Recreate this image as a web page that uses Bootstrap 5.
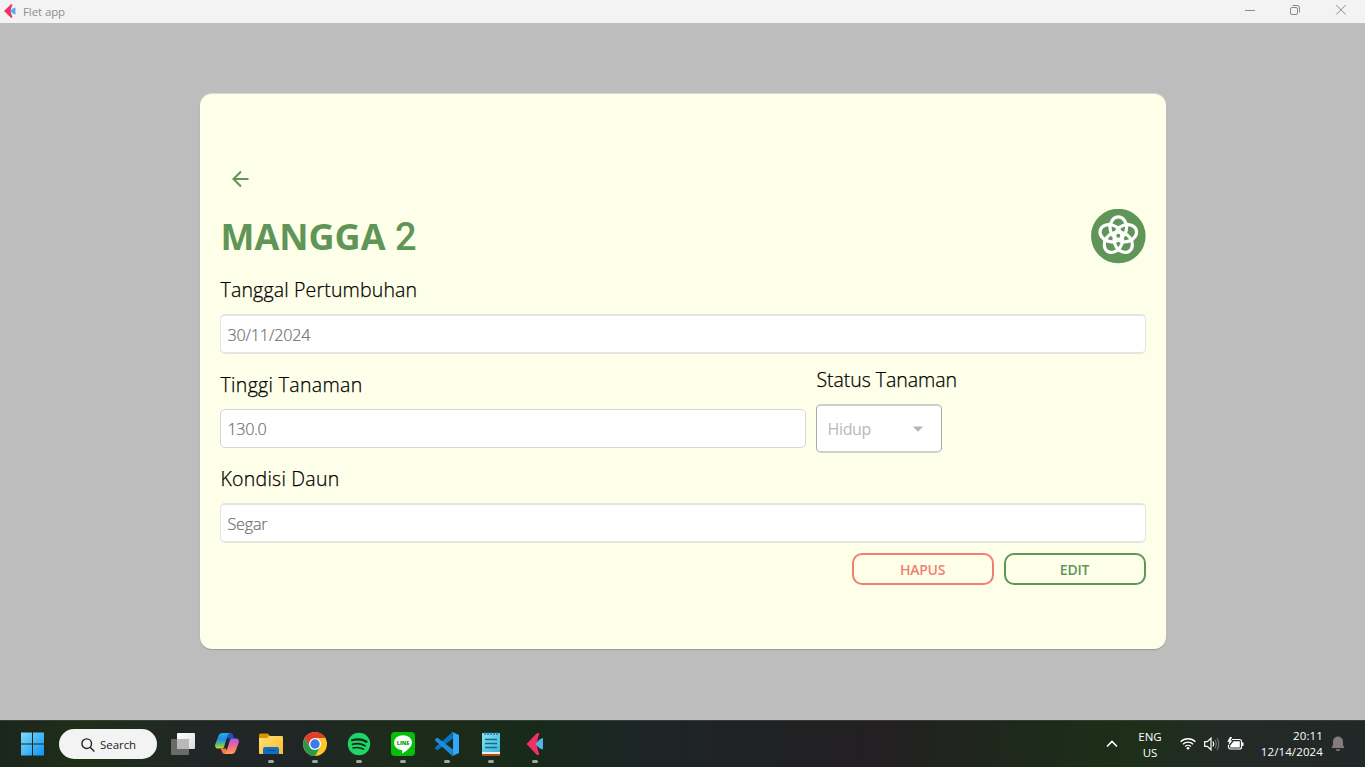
<!DOCTYPE html>
<html lang="id">
<head>
<meta charset="utf-8">
<meta name="viewport" content="width=device-width, initial-scale=1">
<title>Flet app</title>
<link href="https://cdn.jsdelivr.net/npm/bootstrap@5.3.0/dist/css/bootstrap.min.css" rel="stylesheet">
<style>
  :root { --leaf: #5f9557; --coral: #f47d73; }
  body { height: 767px; background: #bdbdbd; font-family: "Open Sans", "Noto Sans", sans-serif; color: #000; overflow: hidden; }
  svg { display: block; flex: none; }
  .titlebar { height: 23px; background: #f3f3f3; color: #8f8f8f; font-size: 11.5px; letter-spacing: -.1px; padding-left: 3px; padding-right: 18px; }
  .titlebar .wincontrols { gap: 34px; padding-bottom: 3px; }
  .plant-card { width: 966px; height: 555px; margin-top: 71px; padding: 65px 20px 0; background: #feffe8; border: 0; border-radius: 12px; box-shadow: 0 1px 1px rgba(0,0,0,.2), 0 -1px 0 rgba(255,255,240,.45); }
  .back { width: 42px; height: 40px; color: var(--leaf); }
  .head-row { height: 55px; margin-top: 10px; }
  .plant-name { color: var(--leaf); font-size: 36px; font-weight: 700; line-height: 56px; letter-spacing: 0; padding-left: 1px; }
  .plant-name span { font-family: Roboto, sans-serif; font-weight: 500; font-size: 38px; letter-spacing: 0; }
  .field-label { font-size: 19.5px; font-weight: 300; -webkit-text-stroke: .25px; line-height: 31px; height: 30px; letter-spacing: .17px; margin-bottom: 10px; padding-left: 1px; white-space: nowrap; }
  .field { height: 40px; padding: 1px 7px 0; border: solid #e4e5e0; border-width: 2px 1px; border-radius: 5px; background: #fff; color: #6e6e6e; font-size: 16.2px; font-weight: 300; -webkit-text-stroke: .2px; letter-spacing: -.22px; line-height: 36px; }
  .field.crisp { height: 39px; border: 1px solid #d6d6d6; letter-spacing: -.4px; }
  .status { width: 126px; height: 49px; padding: 0 17px 0 11px; border: solid #cdcfcb; border-width: 2px 1px; border-left-color: #a9a9a9; border-right-color: #a9a9a9; border-radius: 5px; background: #fff; color: #b9b9b9; font-size: 16px; letter-spacing: -.35px; }
  .act { width: 142px; height: 32px; padding: 2px 0 0; border: 2px solid; border-radius: 10px; font-size: 14px; font-weight: 600; line-height: 26px; letter-spacing: -.25px; background: none; }
  .act-del { color: var(--coral); border-color: var(--coral); }
  .act-edit { color: var(--leaf); border-color: var(--leaf); }
  .taskbar { height: 47px; color: #fff; font-size: 11.5px; border-top: 1px solid #353d35;
    background: linear-gradient(90deg, #1b261c 0, #1f2f18 90px, #202726 190px, #1f2625 300px, #1d2c1a 400px, #172a1a 540px, #1d2527 640px, #231f22 880px, #1c2c19 1060px, #1d2f18 1130px, #232a27 1220px, #222827 100%); }
  .apps { padding-left: 20px; }
  .slot { width: 44px; height: 46px; padding-top: 11px; }
  .slot.running::after { content: ""; width: 6px; height: 3px; border-radius: 2px; background: #a2a7a0; margin-top: 4px; }
  .searchbox { width: 98px; height: 30px; margin: 0 4px 0 14px; border-radius: 15px; background: #f3f3f3; color: #1b1b1b; padding-left: 22px; gap: 5px; padding-top: 1px; letter-spacing: -.05px; }
  .tray { line-height: 16px; padding-bottom: 1px; }
</style>
</head>
<body class="d-flex flex-column">

<header class="titlebar d-flex align-items-center justify-content-between">
  <div class="d-flex align-items-center">
    <svg style="margin-bottom:2px" width="13" height="14" viewBox="0 0 13 14"><path d="M1 7 8 .3C10 0 9.600 1 8.500 3.300 7.500 5.500 7.500 8.500 8.500 10.700 9.600 13 10 14 8 13.700Z" fill="#ee3167"/><path d="M7.500 7 9.500 4.600 12.500 3.500v7L9.500 9.400Z" fill="#52b3e6"/></svg>
    <span style="margin-left:7px">Flet app</span>
  </div>
  <div class="wincontrols d-flex align-items-center">
    <svg width="12" height="12" viewBox="0 0 12 12"><path d="M2 6.500h10" stroke="#8b8b8b"/></svg>
    <svg width="12" height="12" viewBox="0 0 12 12" fill="none" stroke="#8b8b8b"><rect x="1.500" y="3.500" width="7" height="7" rx="1.500"/><path d="M3.500 1.500h4.500a2.500 2.500 0 0 1 2.500 2.500v4.500"/></svg>
    <svg width="12" height="12" viewBox="0 0 12 12"><path d="M1.200 1l9.500 9.500M10.700 1 1.200 10.500" stroke="#8b8b8b"/></svg>
  </div>
</header>

<main class="flex-grow-1 d-flex justify-content-center align-items-start">
  <section class="plant-card card">
    <div class="back d-flex align-items-center justify-content-center">
      <svg width="24" height="24" viewBox="0 0 24 24"><path d="M19.500 12H5M12 4.500l-7.500 7.500 7.500 7.500" fill="none" stroke="currentColor" stroke-width="2.100"/></svg>
    </div>
    <div class="head-row d-flex justify-content-between">
      <h1 class="plant-name mb-0">MANGGA <span>2</span></h1>
      <svg width="55" height="55" viewBox="0 0 55 55"><circle cx="27.300" cy="27" r="27.300" fill="#5f9557"/>
        <g fill="none" stroke="#fff" stroke-width="3.200">
          <ellipse id="petal" cx="27.300" cy="18.500" rx="8.300" ry="10.600"/>
          <use href="#petal" transform="rotate(72 27.300 26.800)"/><use href="#petal" transform="rotate(144 27.300 26.800)"/><use href="#petal" transform="rotate(216 27.300 26.800)"/><use href="#petal" transform="rotate(288 27.300 26.800)"/>
        </g><circle cx="27.300" cy="26.800" r="3.700" fill="none" stroke="#fff" stroke-width="3"/><circle cx="27.300" cy="26.800" r="2" fill="#5f9557"/></svg>
    </div>
    <div class="field-label" style="margin-top:10px">Tanggal Pertumbuhan</div>
    <div class="field">30/11/2024</div>
    <div class="d-flex align-items-center" style="gap:10px;margin-top:10px">
      <div style="width:586px">
        <div class="field-label" style="letter-spacing:.33px">Tinggi Tanaman</div>
        <div class="field crisp">130.0</div>
      </div>
      <div>
        <div class="field-label" style="letter-spacing:-.05px">Status Tanaman</div>
        <div class="status d-flex align-items-center justify-content-between"><span>Hidup</span>
          <svg width="12" height="6" viewBox="0 0 12 6"><path d="M.8.500h10.400L6 5.700Z" fill="#b5b5b5"/></svg></div>
      </div>
    </div>
    <div class="field-label" style="margin-top:10px;letter-spacing:.25px">Kondisi Daun</div>
    <div class="field">Segar</div>
    <div class="d-flex justify-content-end" style="gap:10px;margin-top:10px">
      <button class="act act-del">HAPUS</button>
      <button class="act act-edit">EDIT</button>
    </div>
  </section>
</main>

<footer class="taskbar d-flex justify-content-between">
  <div class="apps d-flex align-items-center">
    <svg width="25" height="24" viewBox="0 0 25 24"><defs><linearGradient id="win" x1="0" y1="0" x2="25" y2="24" gradientUnits="userSpaceOnUse"><stop stop-color="#85dcfd"/><stop offset="1" stop-color="#0793f3"/></linearGradient></defs><path d="M1 .5h11v11H1zM13 .5h11v11H13zM1 12.500h11v11H1zM13 12.500h11v11H13z" fill="url(#win)"/></svg>
    <div class="searchbox d-flex align-items-center">
      <svg width="14" height="14" viewBox="0 0 14 14" fill="none" stroke="#222" stroke-width="1.400"><circle cx="5.700" cy="5.700" r="4.800"/><path d="M9.200 9.200l4.200 4.200"/></svg>
      <span>Search</span>
    </div>
    <div class="slot d-flex flex-column align-items-center">
      <svg width="24" height="24" viewBox="0 0 24 24"><defs><linearGradient id="tv" x1="0" y1="0" x2="1" y2="1"><stop stop-color="#fff"/><stop offset="1" stop-color="#dcdcdc"/></linearGradient></defs><rect x="6" y="1" width="18" height="16" rx="1" fill="url(#tv)"/><rect y="7" width="18" height="16" rx="1" fill="#6a6a6a"/><path d="M6 7h12v10H6z" fill="#b9b9b9"/></svg>
    </div>
    <div class="slot d-flex flex-column align-items-center">
      <svg width="24" height="24" viewBox="0 0 24 24"><defs>
        <linearGradient id="cpA" x1="0" y1="0" x2="0" y2="1"><stop stop-color="#1ab2ec"/><stop offset=".4" stop-color="#2a87e8"/><stop offset=".72" stop-color="#4fc376"/><stop offset="1" stop-color="#f2c820"/></linearGradient>
        <linearGradient id="cpB" x1="0" y1="0" x2="0" y2="1"><stop stop-color="#a65cf2"/><stop offset=".5" stop-color="#f3678b"/><stop offset="1" stop-color="#ffa04a"/></linearGradient></defs>
        <path d="M13 1h2.500c1.700 0 2.300 1.200 2.800 3l.8 2.700H13.500L10 4Z" fill="#1b4fc4"/>
        <path d="M7.500 1H15c-1.500.4-2.100 1.500-2.700 3.400L9.200 14.500C8.700 16 8 16.600 6.500 16.600H3.300C.6 16.600-.3 14.800.3 12.300L3.300 4.200C4.200 2 5.500 1 7.500 1Z" fill="url(#cpA)"/>
        <path d="M5.500 16.600H11l2 5.400h-3c-2 0-2.700-1.200-3.200-3Z" fill="#f5793e"/>
        <path d="M16.500 22H9c1.500-.4 2.100-1.500 2.700-3.400l3.100-10.100c.5-1.500 1.200-2.100 2.700-2.100h3.200c2.700 0 3.600 1.800 3 4.300l-3 8.100c-.9 2.200-2.200 3.200-4.200 3.200Z" fill="url(#cpB)"/></svg>
    </div>
    <div class="slot running d-flex flex-column align-items-center">
      <svg width="24" height="24" viewBox="0 0 24 24"><defs><linearGradient id="fo" x1="0" y1="0" x2="1" y2="1"><stop stop-color="#ffdf76"/><stop offset="1" stop-color="#f9bd2d"/></linearGradient></defs><path d="M0 3q0-1.500 1.500-1.500H8q1 0 1.800 1L11 4v3H0Z" fill="#d99200"/><path d="M0 6h8l2-2h13q1 0 1 1v17H1q-1 0-1-1Z" fill="url(#fo)"/><path d="M4 22v-5q0-2 2-2h12q2 0 2 2v5Z" fill="#0f70c4"/><path d="M7.500 18.500h9" stroke="#0a4f93" stroke-width="1.200"/></svg>
    </div>
    <div class="slot running d-flex flex-column align-items-center">
      <svg width="24" height="24" viewBox="0 0 24 24"><circle cx="12" cy="12" r="12" fill="#fdc928"/><path d="M12 6h10.390A12 12 0 0 0 1.610 6L6.800 15Z" fill="#e33b2e"/><path d="M1.610 6A12 12 0 0 0 12 24L17.200 15 12 17.500 6.800 15Z" fill="#299a4c"/><circle cx="12" cy="12" r="6" fill="#fff"/><circle cx="12" cy="12" r="4.700" fill="#3a7cec"/></svg>
    </div>
    <div class="slot running d-flex flex-column align-items-center">
      <svg width="24" height="24" viewBox="0 0 24 24"><circle cx="12" cy="12" r="11.200" fill="#1fd565"/><g fill="none" stroke="#132a1a" stroke-linecap="round"><path d="M5 8.300c5-1.400 10.500-.9 14.500 1.400" stroke-width="2.200"/><path d="M5.500 12.300c4.300-1.200 8.800-.7 12.500 1.400" stroke-width="1.800"/><path d="M6 15.900c3.800-.9 7.300-.5 10.500 1.300" stroke-width="1.500"/></g></svg>
    </div>
    <div class="slot running d-flex flex-column align-items-center">
      <svg width="24" height="24" viewBox="0 0 24 24"><rect width="24" height="24" rx="4" fill="#06bd0a"/><path d="M12 3.200c5 0 9 3.200 9 7.300 0 4-4.800 8-9.300 10.800-.7.400-.8-.1-.7-.7l.3-2.300C6.600 17.900 3 14.700 3 10.500c0-4.100 4-7.300 9-7.300Z" fill="#fff"/><text x="12" y="13" text-anchor="middle" textLength="12.500" lengthAdjust="spacingAndGlyphs" font-family="Open Sans" font-weight="800" font-size="5.500" fill="#06a50a">LINE</text></svg>
    </div>
    <div class="slot running d-flex flex-column align-items-center">
      <svg width="24" height="24" viewBox="0 0 24 24"><path d="M17.500 0 0 15.500q-.4.600.1 1.100l1.600 1.500q.6.400 1.200 0L18 6.500Z" fill="#0d73b9"/><path d="M17.500 24 0 8.500q-.4-.6.1-1.100L1.700 5.900q.6-.4 1.200 0L18 17.500Z" fill="#1b8cdb"/><path d="M17.500 0 24 3v18l-6.500 3q-.6 0-1-.5Q18 24 18 22V2Q18 0 16.500.5Z" fill="#30a8f6"/></svg>
    </div>
    <div class="slot running d-flex flex-column align-items-center">
      <svg width="24" height="24" viewBox="0 0 24 24"><defs><linearGradient id="np" x1="0" y1="0" x2="1" y2="1"><stop stop-color="#8ce3f2"/><stop offset="1" stop-color="#3db5d6"/></linearGradient></defs><path d="M3 21h18v3H3Z" fill="#a5530f"/><path d="M3 19h18v3H3Z" fill="#eee"/><path d="M3 2q0-1 1-1h16q1 0 1 1v18H3Z" fill="url(#np)"/><path d="M6 7.500h12M6 11.500h12M6 15.500h12" stroke="#116c8d" stroke-width="1.700"/><path d="M6 0v3M9 0v3M12 0v3M15 0v3M18 0v3" stroke="#136e90" stroke-width="1.300"/></svg>
    </div>
    <div class="slot running d-flex flex-column align-items-center">
      <svg width="24" height="24" viewBox="0 0 24 24"><path d="M3.500 12 13.500 1.500C16.500 0 16.700 1.500 15.500 4 13.500 9 13.500 15 15.500 20c1.200 2.500 1 4-2 2.500Z" fill="#ee3167"/><path d="M12.500 12 16.500 7.500 20 6v11.500l-3.500-1.200Z" fill="#55b4e4"/></svg>
    </div>
  </div>

  <div class="tray d-flex align-items-center">
    <svg width="12" height="8" viewBox="0 0 12 8"><path d="M1 6.500 6 1.500l5 5" fill="none" stroke="#fff" stroke-width="1.600"/></svg>
    <div class="text-center" style="width:24px;margin-left:20px;padding-top:2px">ENG<br>US</div>
    <svg style="margin-left:18px" width="16" height="13" viewBox="0 0 16 13" fill="none" stroke="#fff" stroke-width="1.300"><path d="M.6 4.800a10.500 10.500 0 0 1 14.800 0M2.900 7.200a7.200 7.200 0 0 1 10.200 0M5.200 9.500a4 4 0 0 1 5.600 0"/><circle cx="8" cy="11.200" r="1.300" fill="#fff" stroke="none"/></svg>
    <svg style="margin-left:8px" width="16" height="14" viewBox="0 0 16 14" fill="none" stroke="#fff" stroke-width="1.200"><path d="M.7 4.700h2.600L7 1.200v11.600L3.300 9.300H.7Z"/><path d="M9 4.500q1.500 2.500 0 5"/><path d="M11 2.800q2.600 4.200 0 8.400M13 1q3.600 6 0 12" stroke="#68706a"/></svg>
    <svg style="margin-left:7px;margin-right:1px" width="17" height="14" viewBox="0 0 17 14"><path d="M5 2.500h7.500a2 2 0 0 1 2 2v5.500a2 2 0 0 1-2 2H3.500a2 2 0 0 1-2-2V8" fill="none" stroke="#fff" stroke-width="1.200"/><path d="M6.500 4.200h6.300v6.300H3.200V8.500Z" fill="#fff"/><path d="M15 5.500h1.500v3.500H15Z" fill="#fff"/><path d="M3 0 .3 4.800h1.900L1.400 8.500 5.500 3.400H3.600L5 0Z" fill="#fff"/></svg>
    <div class="text-end" style="width:70px;margin-left:8px;letter-spacing:.12px;white-space:nowrap">20:11<br>12/14/2024</div>
    <svg style="margin:0 20px 0 8px" width="14" height="16" viewBox="0 0 14 16"><path d="M7 .5a5 5 0 0 1 5 5V9l1.500 3H.5L2 9V5.500a5 5 0 0 1 5-5ZM4.800 13.200h4.400a2.200 1.900 0 0 1-4.400 0Z" fill="#857b7b"/></svg>
  </div>
</footer>
<script src="https://cdn.jsdelivr.net/npm/bootstrap@5.3.0/dist/js/bootstrap.bundle.min.js"></script>
</body>
</html>
